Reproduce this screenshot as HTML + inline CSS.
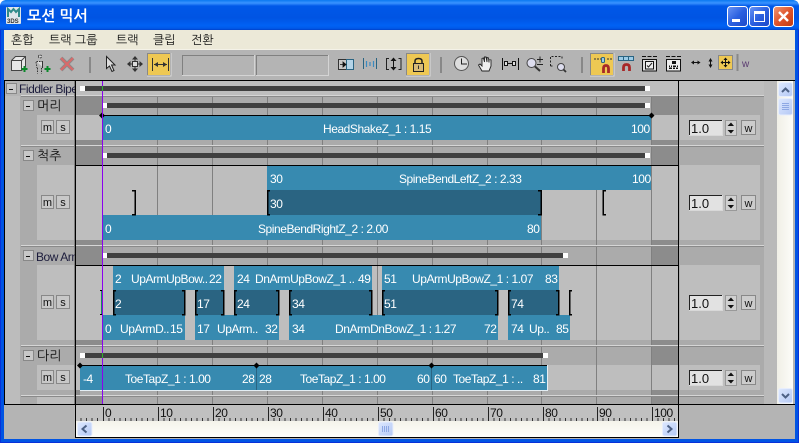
<!DOCTYPE html>
<html><head><meta charset="utf-8"><style>
html,body{margin:0;padding:0;background:#fff;overflow:hidden}
svg{display:block}
text{font-family:"Liberation Sans","NanumGothic",sans-serif}
.w{fill:#fff;font-size:12px;letter-spacing:-.45px}
.k{font-family:"NanumGothic","Noto Sans CJK KR",sans-serif;font-size:12px;fill:#111}
.h{font-family:"NanumGothic","Noto Sans CJK KR",sans-serif;font-size:13px;fill:#111}
.r{fill:#111;font-size:12px;letter-spacing:-.45px}
.l{fill:#1c1c3c;font-size:12px;letter-spacing:-.45px}
.b{fill:#111;font-size:11px;text-anchor:middle}
.n{fill:#111;font-size:13px}
.cr{shape-rendering:crispEdges}
</style></head><body>
<svg width="799" height="443" viewBox="0 0 799 443" xmlns="http://www.w3.org/2000/svg">
<defs>
<linearGradient id="tb" x1="0" y1="0" x2="0" y2="1"><stop offset="0" stop-color="#0a78f0"/><stop offset=".1" stop-color="#3a93ff"/><stop offset=".2" stop-color="#0058e8"/><stop offset=".6" stop-color="#0054e3"/><stop offset=".85" stop-color="#0062f5"/><stop offset=".95" stop-color="#0058e8"/><stop offset="1" stop-color="#0040c8"/></linearGradient>
<linearGradient id="bb" x1="0" y1="0" x2="1" y2="1"><stop offset="0" stop-color="#6b96f5"/><stop offset=".5" stop-color="#2b60e0"/><stop offset="1" stop-color="#1c48c8"/></linearGradient>
<linearGradient id="rb" x1="0" y1="0" x2="1" y2="1"><stop offset="0" stop-color="#ee9a78"/><stop offset=".5" stop-color="#e0542c"/><stop offset="1" stop-color="#c03a10"/></linearGradient>
<linearGradient id="sb" x1="0" y1="0" x2="1" y2="1"><stop offset="0" stop-color="#dde8ff"/><stop offset="1" stop-color="#b4c8f4"/></linearGradient>
<linearGradient id="tr" x1="0" y1="0" x2="0" y2="1"><stop offset="0" stop-color="#f4f3ea"/><stop offset="1" stop-color="#fefefb"/></linearGradient>
<linearGradient id="tv" x1="0" y1="0" x2="1" y2="0"><stop offset="0" stop-color="#f0efe6"/><stop offset="1" stop-color="#fefefb"/></linearGradient>
</defs>

<!-- window frame -->
<rect width="799" height="443" fill="#0054e3"/>
<path d="M0 0H7Q0 0 0 7ZM799 0H792Q799 0 799 7Z" fill="#fff"/>
<path d="M0 30V7Q0 0 7 0H792Q799 0 799 7V30Z" fill="url(#tb)"/>
<rect x="0" y="30" width="1" height="413" fill="#0831d9"/><rect x="798" y="30" width="1" height="413" fill="#0831d9"/><rect y="442" width="799" height="1" fill="#0831d9"/>
<rect x="4" y="30" width="791" height="409" fill="#b4b4b4" class="cr"/>
<rect x="4" y="30" width="791" height="19" fill="#ece9d8" class="cr"/>
<rect x="4" y="49" width="791" height="1" fill="#f4f2e8" class="cr"/>

<!-- title icon + text -->
<rect x="6" y="7" width="15" height="17" fill="#dfe6ea" rx="1"/>
<path d="M8 17V9L11 12L13.500 9L16 12L19 9V17" fill="none" stroke="#2f8a8a" stroke-width="2"/>
<text x="7" y="23" style="font-size:6px;font-weight:bold" fill="#333">3DS</text>
<text x="27" y="21" style="font-family:'NanumGothic','Noto Sans CJK KR',sans-serif;font-size:15px;font-weight:bold" fill="#fff">모션 믹서</text>

<!-- window buttons -->
<g stroke="#fff" stroke-width="1">
<rect x="727.500" y="6.500" width="20" height="20" rx="3" fill="url(#bb)"/>
<rect x="749.500" y="6.500" width="20" height="20" rx="3" fill="url(#bb)"/>
<rect x="773.500" y="6.500" width="20" height="20" rx="3" fill="url(#rb)"/>
</g>
<rect x="732" y="19" width="8" height="3" fill="#fff" class="cr"/>
<path d="M754.500 11.500H764.500V21.500H754.500Z" fill="none" stroke="#fff"/><rect x="754" y="11" width="11" height="3" fill="#fff" class="cr"/>
<path d="M779 12L788 21M788 12L779 21" stroke="#fff" stroke-width="2.400"/>

<!-- menu -->
<text x="11" y="44" class="k">혼합</text>
<text x="49" y="44" class="k">트랙 그룹</text>
<text x="116" y="44" class="k">트랙</text>
<text x="153" y="44" class="k">클립</text>
<text x="191" y="44" class="k">전환</text>

<!-- toolbar -->
<path d="M11.500 60.500L15.500 56.500H25.500V67L21.500 70.500H11.500Z" fill="#e8e8e8" stroke="#444"/><path d="M11.500 60.500H21.500V70.500M21.500 60.500L25.500 56.500" fill="none" stroke="#444"/>
<path d="M24.500 66V72M21.500 69H27.500" stroke="#0a8a2a" stroke-width="2" class="cr"/>
<path d="M40 54.500m-1.500 0a1.500 1.500 0 1 0 3 0a1.500 1.500 0 1 0-3 0M36.500 59.500H42.500V65M36 60L37 66M42.500 60V66M37.500 66V71.500M41.500 66V71.500" transform="translate(0,2)" fill="#ddd" stroke="#333" stroke-dasharray="1.500 1"/>
<path d="M47.500 66V72M44.500 69H50.500" stroke="#0a8a2a" stroke-width="2" class="cr"/>
<path d="M61 58L73 70M73 58L61 70" stroke="#8a8a8a" stroke-width="4"/><path d="M61 58L73 70M73 58L61 70" stroke="#d86a6a" stroke-width="2.200"/>
<rect x="89" y="57" width="2" height="16" fill="#888" class="cr"/>
<path d="M106.500 56.500V68.500L109.500 66L112 71.500L114 70.500L111.500 65H115Z" fill="#ddd" stroke="#222"/>
<path d="M135 56L138 59.500H132ZM135 72L132 68.500H138ZM127 64L130.500 61V67ZM143 64L139.500 61V67Z" fill="#333"/>
<rect x="132.500" y="61.500" width="5" height="5" fill="#ddd" stroke="#333"/>
<path d="M130 64H132.500M137.500 64H140M135 59V61.500M135 66.500V69" stroke="#333"/>

<rect x="147.500" y="53.500" width="23" height="22" fill="#eec853" stroke="#888"/><path d="M171 53V76H147" fill="none" stroke="#ddd"/>
<path d="M152.500 58V71M168.500 58V71" stroke="#333" stroke-width="1" class="cr"/><path d="M154 64.500H167" stroke="#333"/><path d="M154 64.500L158 62V67ZM167 64.500L163 62V67Z" fill="#333"/>

<path d="M182.500 75V55.500H254" fill="none" stroke="#808080" stroke-width="1"/><path d="M254.500 55V75.500H182" fill="none" stroke="#d4d4d4"/>
<path d="M256.500 75V55.500H328" fill="none" stroke="#808080"/><path d="M328.500 55V75.500H256" fill="none" stroke="#d4d4d4"/>

<rect x="338.500" y="59.500" width="9" height="10" fill="#c8c8c8" stroke="#333"/><rect x="346.500" y="59.500" width="7" height="10" fill="#b4d4e8" stroke="#2a6482"/>
<path d="M340 64.500H345M343 62L346 64.500L343 67Z" fill="#111" stroke="#111" stroke-width=".8"/>
<path d="M363.500 58V69M376.500 58V69" stroke="#2a6482" class="cr"/><path d="M366.500 61V67M370 62V66M373.500 61V67" stroke="#3a8ac0" stroke-width="1.200"/>
<path d="M389 58.500H386.500V69.500H389M398.500 58.500H401V69.500H398.500" fill="none" stroke="#222"/><path d="M393.500 59V69" stroke="#111"/><path d="M393.500 57.500L396.500 61H390.500ZM393.500 70.500L390.500 67H396.500Z" fill="#111"/>
<rect x="406.500" y="53.500" width="23" height="22" fill="#eec853" stroke="#888"/><path d="M430 53V76H406" fill="none" stroke="#ddd"/>
<rect x="413.500" y="63.500" width="10" height="8" fill="#d8bc78" stroke="#222"/><path d="M415 63.500V61Q415 58.500 418.500 58.500Q422 58.500 422 61V63.500" fill="none" stroke="#222" stroke-width="1.500"/><path d="M418.500 65.500V69" stroke="#333"/>
<rect x="440" y="57" width="2" height="16" fill="#888" class="cr"/>
<circle cx="461.500" cy="63.500" r="7" fill="#ddd" stroke="#555"/><path d="M461.500 58.500V64H467" fill="none" stroke="#222"/>
<path d="M482 71L478.500 65L480 64L482 66V58.500L483.500 58L484.500 62V57L486 57L487 62V57.500L488.500 58L489 62.500V59.500L491 60V66L489 71Z" fill="#eee" stroke="#222" stroke-width=".9"/>
<path d="M502.500 58V70M518.500 58V70" stroke="#111" class="cr"/><rect x="504.500" y="61.500" width="3" height="4" fill="#ddd" stroke="#111"/><rect x="512.500" y="61.500" width="3" height="4" fill="#ddd" stroke="#111"/><path d="M507.500 63.500H512.500" stroke="#111"/>
<circle cx="531.500" cy="63" r="4.500" fill="#dde" stroke="#444"/><path d="M535 66.500L540 71" stroke="#333" stroke-width="2"/><path d="M537 59.500H543M540 56.500V62.500M537 64.500H543" stroke="#222" class="cr"/>
<path d="M550.500 66V56.500H562V60M550.500 66H554" fill="none" stroke="#222" stroke-dasharray="2 1.500"/><circle cx="561" cy="67" r="3.500" fill="#dde" stroke="#444"/><path d="M563.500 69.500L566 72" stroke="#333" stroke-width="1.800"/>
<rect x="581" y="57" width="2" height="16" fill="#888" class="cr"/>
<rect x="590.500" y="53.500" width="23" height="22" fill="#eec853" stroke="#888"/><path d="M614 53V76H590" fill="none" stroke="#ddd"/>
<path d="M595 58V60M598 58V60M601 58V60M608 58V60M611 58V60" stroke="#333" class="cr"/><rect x="601.500" y="57.500" width="3" height="5" rx="1" fill="#9ccbe6" stroke="#2a6482"/>
<path d="M605 73V68.500Q605 65.500 607.500 65.500Q610 65.500 610 68.500V73" fill="none" stroke="#a82828" stroke-width="2.800" transform="translate(-1.500,0)"/>
<rect x="618.500" y="56.500" width="5" height="4" fill="#9ccbe6" stroke="#2a6482"/><rect x="623.500" y="56.500" width="5" height="4" fill="#9ccbe6" stroke="#2a6482"/><rect x="628.500" y="56.500" width="5" height="4" fill="#9ccbe6" stroke="#2a6482"/>
<path d="M627 71V67.500Q627 64.500 630 64.500Q633 64.500 633 67.500V71" fill="none" stroke="#a82828" stroke-width="2.800" transform="translate(-3.500,0)"/>
<path d="M642 56.500H646M647.500 56.500H651.500M653 56.500H657M642 59.500H657" stroke="#111" class="cr"/><rect x="642.500" y="59.500" width="14" height="11.500" fill="#ddd" stroke="#111"/><rect x="645.500" y="61.500" width="8" height="7.500" fill="#eee" stroke="#111"/><path d="M647 65.500L648.500 67L652 63" fill="none" stroke="#222"/>
<path d="M666 56.500H670M671.500 56.500H675.500M677 56.500H681" stroke="#111" class="cr"/><rect x="666.500" y="59.500" width="14" height="11.500" fill="#eee" stroke="#111"/><rect x="672" y="61" width="4" height="3" fill="#111" class="cr"/><path d="M669 66H670M671 66H672M673 66H676M677 66H678M669 68H672M673 68H675M676 68H678" stroke="#111" stroke-width="1.500" class="cr"/>
<path d="M692.500 62.500H699.500" stroke="#111"/><path d="M691 62.500L694 60.500V64.500ZM700.500 62.500L697.500 60.500V64.500Z" fill="#111"/>
<path d="M710.500 60V66.500" stroke="#111"/><path d="M710.500 58L708.500 61.500H712.500ZM710.500 68L708.500 64.500H712.500Z" fill="#111"/>
<rect x="718.500" y="55.500" width="14" height="14" fill="#eec853" stroke="#888"/>
<path d="M725.500 58V67M721 62.500H730" stroke="#111"/><path d="M725.500 57.500L723.500 60H727.500ZM725.500 67.500L723.500 65H727.500ZM720.500 62.500L723 60.500V64.500ZM730.500 62.500L728 60.500V64.500Z" fill="#111"/>
<rect x="736.500" y="54" width="2" height="17" fill="#888" class="cr"/>
<text x="742" y="67" style="font-size:10px" fill="#5a3a70">w</text>

<!-- panels base -->
<g class="cr">
<rect x="5" y="81" width="15" height="323" fill="#bcbcbc"/>
<rect x="20" y="81" width="55" height="323" fill="#ababab"/>
<rect x="5" y="81" width="70" height="15" fill="#b4b4b4"/>
<rect x="74" y="81" width="1" height="323" fill="#808080"/>
<!-- timeline base -->
<rect x="76" y="81" width="602" height="323" fill="#ababab"/>
<rect x="76" y="81" width="602" height="15" fill="#bebebe"/>
<!-- right panel -->
<rect x="679" y="81" width="85" height="323" fill="#ababab"/>
<rect x="679" y="81" width="85" height="15" fill="#bebebe"/>
<rect x="764" y="81" width="14" height="323" fill="#b9b9b9"/>
<!-- body rows -->
<rect x="76" y="115" width="602" height="25" fill="#bebebe"/>
<rect x="76" y="165" width="602" height="75" fill="#bebebe"/>
<rect x="76" y="265" width="602" height="75" fill="#bebebe"/>
<rect x="76" y="365" width="602" height="25" fill="#bebebe"/>
<rect x="37" y="115" width="37" height="25" fill="#bebebe"/>
<rect x="37" y="165" width="37" height="75" fill="#bebebe"/>
<rect x="37" y="265" width="37" height="75" fill="#bebebe"/>
<rect x="37" y="365" width="37" height="25" fill="#bebebe"/>
<rect x="37" y="397" width="37" height="7" fill="#bebebe"/>
<rect x="680" y="115" width="80" height="25" fill="#bebebe"/>
<rect x="680" y="165" width="80" height="75" fill="#bebebe"/>
<rect x="680" y="265" width="80" height="75" fill="#bebebe"/>
<rect x="680" y="365" width="80" height="25" fill="#bebebe"/>
<!-- out of range dark -->
<path d="M76 97H102V115H76ZM651 97H678V115H651ZM76 140H102V165H76ZM651 140H678V165H651ZM76 240H102V265H76ZM651 240H678V265H651ZM76 340H102V347H76ZM651 340H678V365H651ZM76 390H80V395H76ZM651 390H678V404H651ZM76 397H102V404H76Z" fill="#8c8c8c"/>
<!-- grid -->
<path d="M157.500 97V404M212.500 97V404M267.500 97V404M322.500 97V404M377.500 97V404M432.500 97V404M487.500 97V404M541.500 97V404M596.500 97V404M651.500 97V404" stroke="#808080" stroke-width="1"/>
<!-- separators -->
<g fill="#d6d6d6">
<rect x="76" y="95" width="688" height="1"/><rect x="21" y="95" width="53" height="1"/>
<rect x="76" y="145" width="688" height="1"/><rect x="21" y="145" width="53" height="1"/>
<rect x="76" y="245" width="688" height="1"/><rect x="21" y="245" width="53" height="1"/>
<rect x="76" y="345" width="688" height="1"/><rect x="21" y="345" width="53" height="1"/>
<rect x="76" y="395" width="688" height="1"/><rect x="21" y="395" width="53" height="1"/>
</g>
<g fill="#8a8a8a">
<rect x="76" y="96" width="688" height="1"/><rect x="21" y="96" width="53" height="1"/>
<rect x="76" y="146" width="688" height="1"/><rect x="21" y="146" width="53" height="1"/>
<rect x="76" y="246" width="688" height="1"/><rect x="21" y="246" width="53" height="1"/>
<rect x="76" y="346" width="688" height="1"/><rect x="21" y="346" width="53" height="1"/>
<rect x="76" y="396" width="688" height="1"/><rect x="21" y="396" width="53" height="1"/>
</g>
<!-- header bars -->
<g fill="#404040">
<rect x="85" y="86" width="560" height="5"/>
<rect x="107" y="103" width="538" height="5"/>
<rect x="107" y="153" width="538" height="5"/>
<rect x="107" y="253" width="456" height="5"/>
<rect x="85" y="353" width="458" height="5"/>
</g>
<g fill="#fff">
<rect x="80" y="86" width="5" height="5"/><rect x="645" y="86" width="5" height="5"/>
<rect x="102" y="103" width="5" height="5"/><rect x="645" y="103" width="5" height="5"/>
<rect x="102" y="153" width="5" height="5"/><rect x="645" y="153" width="5" height="5"/>
<rect x="102" y="253" width="5" height="5"/><rect x="563" y="253" width="5" height="5"/>
<rect x="80" y="353" width="5" height="5"/><rect x="543" y="353" width="5" height="5"/>
</g>
<!-- clips light -->
<g fill="#378ab0">
<rect x="102" y="115" width="549" height="25"/>
<rect x="267" y="165" width="384" height="25"/>
<rect x="102" y="215" width="439" height="25"/>
<rect x="113" y="265" width="111" height="25"/>
<rect x="234" y="265" width="138" height="25"/>
<rect x="382" y="265" width="177" height="25"/>
<rect x="102" y="315" width="83" height="25"/>
<rect x="195" y="315" width="84" height="25"/>
<rect x="289" y="315" width="209" height="25"/>
<rect x="508" y="315" width="62" height="25"/>
<rect x="80" y="365" width="467" height="25"/>
</g>
<!-- clips dark -->
<g fill="#2a6482">
<rect x="267" y="190" width="274" height="25"/>
<rect x="113" y="290" width="72" height="25"/>
<rect x="195" y="290" width="29" height="25"/>
<rect x="234" y="290" width="45" height="25"/>
<rect x="289" y="290" width="83" height="25"/>
<rect x="382" y="290" width="116" height="25"/>
<rect x="508" y="290" width="51" height="25"/>
</g>
<rect x="547" y="365" width="1" height="26" fill="#e4eef4"/><rect x="80" y="390" width="468" height="1" fill="#e4eef4"/>
<rect x="256" y="366" width="1" height="24" fill="#2a6482"/><rect x="431" y="366" width="1" height="24" fill="#2a6482"/>
<!-- clip top black lines -->
<rect x="102" y="115" width="549" height="1" fill="#000"/>
<rect x="76" y="165" width="602" height="1" fill="#000"/>
<rect x="76" y="265" width="602" height="1" fill="#000"/>
<rect x="80" y="365" width="467" height="1" fill="#000"/>
</g>
<!-- diamonds -->
<g fill="#000">
<path d="M102 112.500L105 115.500L102 118.500L99 115.500ZM651.500 112.500L654.500 115.500L651.500 118.500L648.500 115.500ZM80 362.500L83 365.500L80 368.500L77 365.500ZM256.500 362.500L259.500 365.500L256.500 368.500L253.500 365.500ZM431.500 362.500L434.500 365.500L431.500 368.500L428.500 365.500Z"/>
</g>
<!-- brackets -->
<g fill="none" stroke="#000" stroke-width="1.500" class="cr">
<path d="M132 190.500H135V214.500H132M270 190.500H267.500V214.500H270M538 190.500H541V214.500H538M606 190.500H603V214.500H606"/>
<path d="M116 290.500H113.500V314.500H116M182 290.500H184.500V314.500H182M198 290.500H195.500V314.500H198M221 290.500H223.500V314.500H221M237 290.500H234.500V314.500H237M276 290.500H278.500V314.500H276M292 290.500H289.500V314.500H292M369 290.500H371.500V314.500H369M385 290.500H382.500V314.500H385M495 290.500H497.500V314.500H495M511 290.500H508.500V314.500H511M556 290.500H558.500V314.500H556M572 290.500H569.500V314.500H572"/>
</g>
<rect x="100" y="290" width="2" height="1" fill="#000" class="cr"/><rect x="100" y="314" width="2" height="1" fill="#000" class="cr"/>
<rect x="101" y="291" width="1" height="23" fill="#1a8a5a" class="cr"/>
<!-- purple line -->
<rect x="102" y="81" width="1" height="323" fill="#8a00f0" class="cr"/>
<rect x="102" y="86" width="1" height="5" fill="#30b030" class="cr"/><rect x="102" y="353" width="1" height="5" fill="#30b030" class="cr"/>

<!-- clip text -->
<g class="w" transform="translate(0,1)">
<text x="105" y="132">0</text><text x="323" y="132">HeadShakeZ_1 : 1.15</text><text x="631" y="132">100</text>
<text x="270" y="182">30</text><text x="399" y="182">SpineBendLeftZ_2 : 2.33</text><text x="632" y="182">100</text>
<text x="270" y="207">30</text>
<text x="105" y="232">0</text><text x="258" y="232">SpineBendRightZ_2 : 2.00</text><text x="527" y="232">80</text>
<text x="115" y="282">2</text><text x="131" y="282">UpArmUpBow..</text><text x="209" y="282">22</text>
<text x="237" y="282">24</text><text x="255" y="282">DnArmUpBowZ_1 ..</text><text x="358" y="282">49</text>
<text x="384" y="282">51</text><text x="412" y="282">UpArmUpBowZ_1 : 1.07</text><text x="545" y="282">83</text>
<text x="115" y="307">2</text><text x="197" y="307">17</text><text x="237" y="307">24</text><text x="292" y="307">34</text><text x="384" y="307">51</text><text x="511" y="307">74</text>
<text x="105" y="332">0</text><text x="120" y="332">UpArmD..</text><text x="170" y="332">15</text>
<text x="197" y="332">17</text><text x="217" y="332">UpArm..</text><text x="265" y="332">32</text>
<text x="292" y="332">34</text><text x="335" y="332">DnArmDnBowZ_1 : 1.27</text><text x="484" y="332">72</text>
<text x="511" y="332">74</text><text x="529" y="332">Up..</text><text x="556" y="332">85</text>
<text x="83" y="382">-4</text><text x="125" y="382">ToeTapZ_1 : 1.00</text><text x="242" y="382">28</text>
<text x="259" y="382">28</text><text x="300" y="382">ToeTapZ_1 : 1.00</text><text x="417" y="382">60</text>
<text x="434" y="382">60</text><text x="453" y="382">ToeTapZ_1 : ..</text><text x="533" y="382">81</text>
</g>

<!-- left panel labels and buttons -->
<g fill="#c8c8c8" stroke="#888">
<rect x="6.500" y="83.500" width="10" height="10"/>
<rect x="23.500" y="100.500" width="10" height="10"/>
<rect x="23.500" y="150.500" width="10" height="10"/>
<rect x="23.500" y="250.500" width="10" height="10"/>
<rect x="23.500" y="350.500" width="10" height="10"/>
</g>
<path d="M9 89.500H13M26 106.500H30M26 156.500H30M26 256.500H30M26 356.500H30" stroke="#111" class="cr"/>
<svg x="19" y="81" width="56" height="15"><text x="0" y="12" class="l">Fiddler Bipe</text></svg>
<text x="37" y="110" class="h">머리</text>
<text x="37" y="160" class="h">척추</text>
<svg x="36" y="247" width="39" height="18"><text x="0" y="14" class="l">Bow Arm</text></svg>
<text x="37" y="360" class="h">다리</text>

<!-- m / s -->
<g fill="#c8c8c8" stroke="#888">
<rect x="41.500" y="120.500" width="12" height="13"/><rect x="56.500" y="120.500" width="13" height="13"/>
<rect x="41.500" y="195.500" width="12" height="13"/><rect x="56.500" y="195.500" width="13" height="13"/>
<rect x="41.500" y="295.500" width="12" height="13"/><rect x="56.500" y="295.500" width="13" height="13"/>
<rect x="41.500" y="370.500" width="12" height="13"/><rect x="56.500" y="370.500" width="13" height="13"/>
</g>
<g class="b">
<text x="47.500" y="131">m</text><text x="63" y="131">s</text>
<text x="47.500" y="206">m</text><text x="63" y="206">s</text>
<text x="47.500" y="306">m</text><text x="63" y="306">s</text>
<text x="47.500" y="381">m</text><text x="63" y="381">s</text>
</g>

<!-- right controls -->
<g id="rc">
<g fill="#e2e2e2" stroke="#d8d8d8"><rect x="689.500" y="120.500" width="33" height="15"/><rect x="689.500" y="195.500" width="33" height="15"/><rect x="689.500" y="295.500" width="33" height="15"/><rect x="689.500" y="370.500" width="33" height="15"/></g>
<path d="M689.500 135V120.500H722M689.500 210V195.500H722M689.500 310V295.500H722M689.500 385V370.500H722" fill="none" stroke="#222" stroke-width="1"/>
<g fill="#d0d0d0" stroke="#999"><rect x="725.500" y="120.500" width="11" height="15"/><rect x="725.500" y="195.500" width="11" height="15"/><rect x="725.500" y="295.500" width="11" height="15"/><rect x="725.500" y="370.500" width="11" height="15"/></g>
<path d="M727.500 126H734L731 122.500ZM727.500 130H734L731 133.500ZM727.500 201H734L731 197.500ZM727.500 205H734L731 208.500ZM727.500 301H734L731 297.500ZM727.500 305H734L731 308.500ZM727.500 376H734L731 372.500ZM727.500 380H734L731 383.500Z" fill="#111"/>
<g fill="#cccccc" stroke="#888"><rect x="741.500" y="120.500" width="14" height="14"/><rect x="741.500" y="195.500" width="14" height="14"/><rect x="741.500" y="295.500" width="14" height="14"/><rect x="741.500" y="370.500" width="14" height="14"/></g>
<g class="n"><text x="691" y="133">1.0</text><text x="691" y="208">1.0</text><text x="691" y="308">1.0</text><text x="691" y="383">1.0</text></g>
<g class="b"><text x="748.500" y="132">w</text><text x="748.500" y="207">w</text><text x="748.500" y="307">w</text><text x="748.500" y="382">w</text></g>
</g>

<!-- right scrollbar -->
<rect x="777" y="81" width="18" height="323" fill="url(#tv)" class="cr"/>
<rect x="793" y="81" width="2" height="323" fill="#b4b4b4" class="cr"/>
<g fill="url(#sb)" stroke="#e8eefc">
<rect x="778.500" y="82.500" width="14" height="14" rx="2"/><rect x="778.500" y="98.500" width="14" height="16.500" rx="2"/><rect x="778.500" y="388.500" width="14" height="14.500" rx="2"/>
</g>
<path d="M782 92L785.500 88.500L789 92M782 394L785.500 397.500L789 394" fill="none" stroke="#4d6185" stroke-width="2"/>
<path d="M782 103.500H789M782 105.500H789M782 107.500H789M782 109.500H789" stroke="#8ea8e4" class="cr"/>

<!-- ruler -->
<rect x="76" y="405" width="602" height="16" fill="#c0c0c0" class="cr"/>
<path d="M103.500 407V421M158.500 407V421M213.500 407V421M268.500 407V421M323.500 407V421M378.500 407V421M433.500 407V421M488.500 407V421M543.500 407V421M597.500 407V421M652.500 407V421" stroke="#222" class="cr"/>
<path d="M81 418V421M86.500 418V421M92 418V421M97.500 418V421M109 418V421M114.500 418V421M120 418V421M125.500 418V421M131 418V421M136.500 418V421M142 418V421M147.500 418V421M153 418V421M164 418V421M169.500 418V421M175 418V421M180.500 418V421M186 418V421M191.500 418V421M197 418V421M202.500 418V421M208 418V421M219 418V421M224.500 418V421M230 418V421M235.500 418V421M241 418V421M246.500 418V421M252 418V421M257.500 418V421M263 418V421M274 418V421M279.500 418V421M285 418V421M290.500 418V421M296 418V421M301.500 418V421M307 418V421M312.500 418V421M318 418V421M329 418V421M334.500 418V421M340 418V421M345.500 418V421M351 418V421M356.500 418V421M362 418V421M367.500 418V421M373 418V421M384 418V421M389.500 418V421M395 418V421M400.500 418V421M406 418V421M411.500 418V421M417 418V421M422.500 418V421M428 418V421M439 418V421M444.500 418V421M450 418V421M455.500 418V421M461 418V421M466.500 418V421M472 418V421M477.500 418V421M483 418V421M494 418V421M499.500 418V421M505 418V421M510.500 418V421M516 418V421M521.500 418V421M527 418V421M532.500 418V421M538 418V421M549 418V421M554.500 418V421M560 418V421M565.500 418V421M571 418V421M576.500 418V421M582 418V421M587.500 418V421M593 418V421M603 418V421M608.500 418V421M614 418V421M619.500 418V421M625 418V421M630.500 418V421M636 418V421M641.500 418V421M647 418V421M658 418V421M663.500 418V421M669 418V421M674.500 418V421" stroke="#333"/>
<g class="r"><text x="105" y="417">0</text><text x="160" y="417">10</text><text x="215" y="417">20</text><text x="270" y="417">30</text><text x="325" y="417">40</text><text x="380" y="417">50</text><text x="435" y="417">60</text><text x="490" y="417">70</text><text x="545" y="417">80</text><text x="599" y="417">90</text><text x="654" y="417">100</text></g>

<!-- bottom scrollbar -->
<rect x="76" y="421" width="602" height="16" fill="url(#tr)" class="cr"/>
<g fill="url(#sb)" stroke="#e8eefc">
<rect x="77.500" y="422" width="14.500" height="14" rx="2"/><rect x="378.500" y="422" width="14.500" height="14" rx="2"/><rect x="662.500" y="422" width="14.500" height="14" rx="2"/>
</g>
<path d="M86.500 425.500L82.500 429L86.500 432.500M667.500 425.500L671.500 429L667.500 432.500" fill="none" stroke="#4d6185" stroke-width="2"/>
<path d="M382.500 426V432M384.500 426V432M386.500 426V432M388.500 426V432" stroke="#8ea8e4" class="cr"/>

<!-- black frame lines -->
<g fill="#000" class="cr">
<rect x="4" y="80" width="791" height="1"/>
<rect x="4" y="80" width="1" height="325"/>
<rect x="4" y="404" width="791" height="1"/>
<rect x="75" y="80" width="1" height="358"/>
<rect x="678" y="80" width="1" height="358"/>
<rect x="75" y="437" width="604" height="1"/>
</g>
</svg>
</body></html>
